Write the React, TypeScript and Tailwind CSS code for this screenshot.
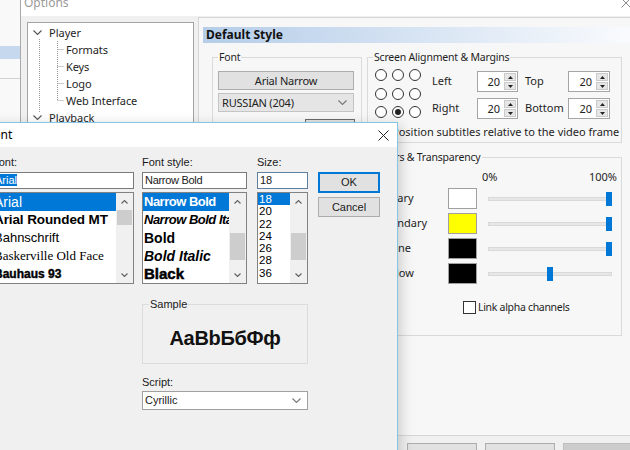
import React from "react";

const ui = "[font-family:'Noto_Sans',sans-serif]";
const ms = "[font-family:'Liberation_Sans',Arial,sans-serif]";
const serif = "[font-family:'Liberation_Serif',serif]";

function Chevron({ up = false, w = 9, h = 5, color = "#606060" }: { up?: boolean; w?: number; h?: number; color?: string }) {
  const d = up ? `M0.5 ${h - 0.5} L${w / 2} 0.5 L${w - 0.5} ${h - 0.5}` : `M0.5 0.5 L${w / 2} ${h - 0.5} L${w - 0.5} 0.5`;
  return (
    <svg width={w} height={h} viewBox={`0 0 ${w} ${h}`}>
      <path d={d} fill="none" stroke={color} strokeWidth="1.1" />
    </svg>
  );
}

function CloseX({ size = 10, color = "#222" }: { size?: number; color?: string }) {
  return (
    <svg width={size} height={size} viewBox={`0 0 ${size} ${size}`}>
      <path d={`M0.5 0.5 L${size - 0.5} ${size - 0.5} M${size - 0.5} 0.5 L0.5 ${size - 0.5}`} stroke={color} strokeWidth="1" />
    </svg>
  );
}

function Tree() {
  const children = ["Formats", "Keys", "Logo", "Web Interface"];
  return (
    <div className="relative mt-[6px] w-[167px] h-[380px] bg-white border border-[#a3a3a3] pt-[1px] text-[11px] text-[#1e1e1e]">
      <svg className="absolute left-0 top-0" width="60" height="100">
        <g stroke="#9a9a9a" strokeWidth="1" strokeDasharray="1 1" fill="none">
          <path d="M11.5 16 V90" />
          <path d="M29.5 18 V77.5" />
          <path d="M29.5 26.5 H36 M29.5 43.5 H36 M29.5 60.5 H36 M29.5 77.5 H36" />
        </g>
      </svg>
      <div className="relative flex items-center h-[17px] pl-[5px]">
        <Chevron w={9} h={5} color="#555" />
        <span className="ml-[7px] leading-[17px]">Player</span>
      </div>
      {children.map((c) => (
        <div key={c} className="relative flex items-center h-[17px] pl-[38px] leading-[17px] tracking-[-0.1px]">
          {c}
        </div>
      ))}
      <div className="relative flex items-center h-[17px] pl-[5px]">
        <Chevron w={9} h={5} color="#555" />
        <span className="ml-[7px] leading-[17px]">Playback</span>
      </div>
    </div>
  );
}

function Group({ label, className, children }: { label: string; className: string; children?: React.ReactNode }) {
  return (
    <div className={`relative border border-[#dadada] ${className}`}>
      <span className="absolute left-[5px] top-[-8px] px-[1px] bg-[#f7f7f7] text-[10.5px] tracking-[-0.2px] leading-[14px] text-[#1e1e1e] whitespace-nowrap">
        {label}
      </span>
      {children}
    </div>
  );
}

function Radio({ on = false }: { on?: boolean }) {
  return (
    <div className="w-[12px] h-[12px] rounded-full border border-[#333] bg-white flex items-center justify-center">
      {on && <div className="w-[6px] h-[6px] rounded-full bg-[#222]" />}
    </div>
  );
}

function Tri({ up }: { up: boolean }) {
  return (
    <svg width="5" height="3" viewBox="0 0 5 3">
      <path d={up ? "M0 3 L2.5 0 L5 3 Z" : "M0 0 L2.5 3 L5 0 Z"} fill="#222" />
    </svg>
  );
}

function Spin({ value, w }: { value: string; w: string }) {
  return (
    <div className={`flex h-[21px] ${w} border border-[#a5a5a5] bg-white`}>
      <div className="flex-1 text-right pr-[4px] text-[11px] leading-[19px] text-[#222]">{value}</div>
      <div className="flex flex-col gap-[1px] py-[1px] pr-[1px] w-[13px]">
        <div className="flex-1 bg-[#e6e6e6] border border-[#cacaca] flex items-center justify-center">
          <Tri up />
        </div>
        <div className="flex-1 bg-[#e6e6e6] border border-[#cacaca] flex items-center justify-center">
          <Tri up={false} />
        </div>
      </div>
    </div>
  );
}

function Checkbox() {
  return <div className="w-[13px] h-[13px] border border-[#333] bg-white shrink-0" />;
}

const colorRows = [
  { label: "Primary", swatch: "bg-white", pct: 100 },
  { label: "Secondary", swatch: "bg-[#ffff00]", pct: 100 },
  { label: "Outline", swatch: "bg-black", pct: 100 },
  { label: "Shadow", swatch: "bg-black", pct: 50 },
];

function Panel() {
  return (
    <div className="ml-[4px] mt-[1px] w-[440px] h-[419px] bg-[#f7f7f7] border-l border-t border-b border-[#d6d6d6] text-[11px] text-[#1e1e1e]">
      <div className="ml-[4px] mt-[9px] h-[16px] w-[440px] bg-linear-to-r from-[#b5cde8] to-[#fbfcfe] pl-[3px] text-[12px] font-bold leading-[16px] text-[#111]">
        Default Style
      </div>
      <div className="flex items-start mt-[14px] ml-[13px]">
        <Group label="Font" className="w-[150px] h-[240px]">
          <div className="flex flex-col items-start px-[5px] pt-[13px]">
            <div className="w-[136px] h-[19px] bg-[#e1e1e1] border border-[#adadad] flex items-center justify-center leading-[17px] text-[#222] tracking-[-0.2px]">
              Arial Narrow
            </div>
            <div className="mt-[3px] w-[136px] h-[19px] bg-[#e5e5e5] border border-[#c4c4c4] flex items-center pl-[3px] pr-[6px] leading-[17px] text-[#222] tracking-[-0.2px]">
              RUSSIAN (204)
              <span className="ml-auto flex">
                <Chevron w={9} h={5} color="#777" />
              </span>
            </div>
            <div className="mt-[7px] ml-[87px] w-[50px] h-[20px] bg-[#e1e1e1] border border-[#6a6a6a]" />
          </div>
        </Group>
        <div className="ml-[5px] flex flex-col">
          <Group label="Screen Alignment & Margins" className="w-[255px] h-[86px]">
            <div className="flex items-start">
              <div className="ml-[7px] mt-[11px] grid grid-cols-[12px_12px_12px] gap-x-[5px] gap-y-[6.5px]">
                <Radio />
                <Radio />
                <Radio />
                <Radio />
                <Radio />
                <Radio />
                <Radio />
                <Radio on />
                <Radio />
              </div>
              <div className="ml-[11px] mt-[13px] grid grid-cols-[45px_41px_50px_42px] gap-y-[6px] items-center">
                <span>Left</span>
                <Spin value="20" w="w-[41px]" />
                <span className="pl-[7px]">Top</span>
                <Spin value="20" w="w-[42px]" />
                <span>Right</span>
                <Spin value="20" w="w-[41px]" />
                <span className="pl-[7px]">Bottom</span>
                <Spin value="20" w="w-[42px]" />
              </div>
            </div>
            <div className="flex items-center ml-[8px] mt-[6px] gap-[3px] leading-[14px]">
              <Checkbox />
              <span className="whitespace-nowrap">Position subtitles relative to the video frame</span>
            </div>
          </Group>
          <Group label="Colors & Transparency" className="mt-[14px] w-[255px] h-[179px]">
            <div className="mt-[12px] h-[13px] leading-[13px] flex">
              <span className="ml-[114px]">0%</span>
              <span className="ml-auto mr-[4px]">100%</span>
            </div>
            <div className="mt-[5px] flex flex-col gap-[4px]">
              {colorRows.map((r) => (
                <div key={r.label} className="flex items-center h-[21px]">
                  <span className="w-[80px] pl-[5px]">{r.label}</span>
                  <div className={`w-[29px] h-[21px] border border-[#a0a0a0] ${r.swatch}`} />
                  <div className="relative ml-[11px] w-[124px] h-[21px] flex items-center">
                    <div className="w-full h-[4px] bg-[#e7e7e7] border border-[#d9d9d9]" />
                    <div
                      className="absolute top-[3.5px] w-[6px] h-[14px] bg-[#0078d7]"
                      style={{ left: `${(r.pct / 100) * 118}px` }}
                    />
                  </div>
                </div>
              ))}
            </div>
            <div className="mt-[16px] ml-[95px] flex items-center gap-[2px] leading-[14px]">
              <Checkbox />
              <span className="text-[10.5px] tracking-[-0.3px]">Link alpha channels</span>
            </div>
          </Group>
        </div>
      </div>
    </div>
  );
}

function OptionsWindow() {
  return (
    <div className="absolute left-[20px] top-[-15px] w-[620px] h-[470px] border-l border-[#a9a9a9] bg-[#f0f0f0] flex flex-col">
      <div className="h-[31px] shrink-0 bg-white flex items-start">
        <span className="pt-[11px] pl-[3px] text-[12px] leading-[14px] text-[#9a9a9a]">Options</span>
        <span className="ml-auto w-[28px] pt-[13px] flex justify-center">
          <CloseX size={10} color="#8a8a8a" />
        </span>
      </div>
      <div className="flex items-start pl-[6px]">
        <Tree />
        <Panel />
      </div>
      <div className="flex pl-[386px] mt-[7px] gap-[8px]">
        <div className="w-[70px] h-[23px] bg-[#e1e1e1] border border-[#adadad]" />
        <div className="w-[70px] h-[23px] bg-[#e1e1e1] border border-[#adadad]" />
        <div className="w-[70px] h-[23px] bg-[#cccccc] border border-[#bfbfbf]" />
      </div>
    </div>
  );
}

function ScrollBar({ thumb }: { thumb: string }) {
  return (
    <div className="w-[17px] h-full bg-[#f0f0f0] flex flex-col shrink-0">
      <div className="h-[17px] flex items-center justify-center">
        <Chevron up w={7} h={4} />
      </div>
      <div className="flex-1 flex flex-col px-[1px]">
        <div className={`bg-[#cdcdcd] ${thumb}`} />
      </div>
      <div className="h-[17px] flex items-center justify-center">
        <Chevron w={7} h={4} />
      </div>
    </div>
  );
}

const fontItems = [
  { t: "Arial", c: "text-[14px]", sel: true },
  { t: "Arial Rounded MT", c: "text-[13.5px] font-bold tracking-[-0.1px]", sel: false },
  { t: "Bahnschrift", c: "text-[13px] text-[#4a4a4a]", sel: false },
  { t: "Baskerville Old Face", c: `text-[13px] ${serif}`, sel: false },
  { t: "Bauhaus 93", c: "text-[12px] font-bold [-webkit-text-stroke:0.4px]", sel: false },
];

const styleItems = [
  { t: "Narrow Bold", c: "text-[13px] font-bold tracking-[-0.5px]", sel: true },
  { t: "Narrow Bold Italic", c: "text-[13px] font-bold italic tracking-[-0.5px]", sel: false },
  { t: "Bold", c: "text-[14px] font-bold", sel: false },
  { t: "Bold Italic", c: "text-[14px] font-bold italic", sel: false },
  { t: "Black", c: "text-[15px] font-bold [-webkit-text-stroke:0.5px]", sel: false },
];

const sizes = ["18", "20", "22", "24", "26", "28", "36"];

function FontDialog() {
  return (
    <div className="absolute left-[-20px] top-[122px] w-[418px] h-[340px] border border-[#86c5e3] bg-[#f0f0f0] shadow-[3px_3px_12px_rgba(0,0,0,0.18)] flex flex-col">
      <div className="h-[24px] shrink-0 bg-white flex items-center">
        <span className={`pl-[6px] text-[12px] text-black ${ui}`}>Font</span>
        <span className="ml-auto w-[28px] flex justify-center">
          <CloseX size={11} color="#222" />
        </span>
      </div>
      <div className={`pl-[11px] pt-[9px] ${ms} text-[11px] text-[#1a1a1a]`}>
        <div className="flex items-start">
          <div className="w-[142px] flex flex-col">
            <div className="h-[13px] leading-[13px]">Font:</div>
            <div className="mt-[3px] h-[17px] border border-[#7a7a7a] bg-white leading-[15px] pl-[2px]">
              <span className="bg-[#0078d7] text-white">Arial</span>
            </div>
            <div className="mt-[3px] h-[92px] border border-[#828282] bg-white flex">
              <div className="flex-1 overflow-hidden">
                {fontItems.map((f) => (
                  <div
                    key={f.t}
                    className={`h-[18px] leading-[18px] pl-[1px] whitespace-nowrap overflow-hidden ${f.c} ${f.sel ? "bg-[#0078d7] text-white" : "text-black"}`}
                  >
                    {f.t}
                  </div>
                ))}
              </div>
              <ScrollBar thumb="mt-[0px] h-[15px]" />
            </div>
          </div>
          <div className="ml-[8px] w-[105px] flex flex-col">
            <div className="h-[13px] leading-[13px]">Font style:</div>
            <div className="mt-[3px] h-[17px] border border-[#7a7a7a] bg-white leading-[15px] pl-[2px] tracking-[-0.3px]">
              Narrow Bold
            </div>
            <div className="mt-[3px] h-[92px] border border-[#828282] bg-white flex">
              <div className="flex-1 overflow-hidden">
                {styleItems.map((f) => (
                  <div
                    key={f.t}
                    className={`h-[18px] leading-[18px] pl-[1px] whitespace-nowrap overflow-hidden ${f.c} ${f.sel ? "bg-[#0078d7] text-white" : "text-black"}`}
                  >
                    {f.t}
                  </div>
                ))}
              </div>
              <ScrollBar thumb="mt-[23px] h-[27px]" />
            </div>
          </div>
          <div className="ml-[10px] w-[51px] flex flex-col">
            <div className="h-[13px] leading-[13px]">Size:</div>
            <div className="mt-[3px] h-[17px] border border-[#5f7f9f] bg-white leading-[15px] pl-[2px]">18</div>
            <div className="mt-[3px] h-[92px] border border-[#828282] bg-white flex">
              <div className="flex-1 overflow-hidden">
                {sizes.map((s, i) => (
                  <div
                    key={s}
                    className={`h-[12.3px] leading-[12.3px] pl-[1px] text-[11.5px] ${i === 0 ? "bg-[#0078d7] text-white" : "text-black"}`}
                  >
                    {s}
                  </div>
                ))}
              </div>
              <ScrollBar thumb="mt-[23px] h-[27px]" />
            </div>
          </div>
          <div className="ml-[10px] w-[62px] flex flex-col pt-[16px]">
            <div className="h-[21px] bg-[#e1e1e1] border border-[#0078d7] shadow-[inset_0_0_0_1px_#0078d7] flex items-center justify-center">
              OK
            </div>
            <div className="mt-[4px] h-[20px] bg-[#e1e1e1] border border-[#adadad] flex items-center justify-center">
              Cancel
            </div>
          </div>
        </div>
        <div className="ml-[150px] w-[166px] flex flex-col">
          <div className="relative mt-[20px] h-[60px] border border-[#dcdcdc]">
            <span className="absolute left-[6px] top-[-8px] px-[1px] bg-[#f0f0f0] leading-[14px]">Sample</span>
            <div className="h-full flex items-center justify-center pt-[8px] text-[20px] font-bold tracking-[-0.3px] text-[#111]">
              AaBbБбФф
            </div>
          </div>
          <div className="mt-[12px] h-[13px] leading-[13px]">Script:</div>
          <div className="mt-[2px] h-[19px] border border-[#a0a0a0] bg-white flex items-center pl-[2px] pr-[6px]">
            Cyrillic
            <span className="ml-auto flex">
              <Chevron w={9} h={5} color="#777" />
            </span>
          </div>
        </div>
      </div>
    </div>
  );
}

export default function App() {
  return (
    <div className={`relative w-[630px] h-[450px] overflow-hidden bg-[#f7f7f7] ${ui}`}>
      <div className="absolute left-0 top-0 w-[20px] h-[450px] bg-[#f9f9f9]">
        <div className="mt-[46px] h-[13px] bg-[#c6d8ee]" />
        <div className="mt-[19px] h-px bg-[#d2d2d2]" />
      </div>
      <OptionsWindow />
      <FontDialog />
    </div>
  );
}
